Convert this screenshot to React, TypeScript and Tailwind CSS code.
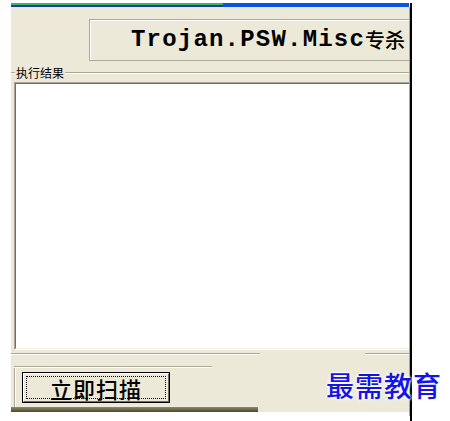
import React from 'react';

const cjk = "'Noto Sans CJK SC', sans-serif";

const App: React.FC = () => {
  return (
    <div className="relative w-[450px] h-[421px] bg-white overflow-hidden">
      {/* window, clipped on the right by a black edge */}
      <div className="ml-[11px] pt-[3px] w-[401px] h-[421px] flex">
        <div className="w-[398px] flex flex-col">
          {/* title bar strip */}
          <div className="flex h-[4px]">
            <div className="w-[212px] flex flex-col">
              <div className="h-[2px] bg-[#3cb371]" />
              <div className="h-[2px] bg-[#1b3f8f]" />
            </div>
            <div className="flex-1 bg-[#0a55e0]" />
          </div>

          <div className="h-[405px] bg-[#ece9d8] flex flex-col">
            {/* title box */}
            <div className="mt-[12px] ml-[78px] h-[42px] border-t border-l border-b border-[#aca899] shadow-[inset_1px_1px_0_#ffffff] flex items-center pl-[41px] whitespace-nowrap">
              <span
                className="text-[24px] font-bold text-black tracking-[1.2px] leading-none"
                style={{ fontFamily: "'Liberation Mono', monospace" }}
              >
                Trojan.PSW.Misc
              </span>
              <span
                className="text-[20px] font-medium text-black leading-none"
                style={{ fontFamily: cjk }}
              >
                专杀
              </span>
            </div>

            {/* group box header */}
            <div className="mt-[5px] h-[14px] flex items-center">
              <div className="w-[4px] h-[2px] border-t border-[#aca899] border-b border-b-white" />
              <span className="px-[1px] text-[12px] leading-[14px] text-black" style={{ fontFamily: cjk }}>
                执行结果
              </span>
              <div className="flex-1 h-[2px] border-t border-[#aca899] border-b border-b-white" />
            </div>

            {/* result area */}
            <div className="mt-[2px] ml-[3px] h-[268px] border-t border-l border-b border-t-[#aca899] border-l-[#aca899] border-b-white">
              <div className="h-full border-t border-l border-b border-t-[#716f64] border-l-[#716f64] border-b-[#f1efe2] bg-white" />
            </div>

            {/* group box bottom */}
            <div className="mt-[3px] flex h-[2px]">
              <div className="w-[249px] border-t border-[#aca899] border-b border-b-white" />
              <div className="w-[105px]" />
              <div className="flex-1 border-t border-[#aca899] border-b border-b-white" />
            </div>

            {/* bottom panel */}
            <div className="mt-[11px] ml-[3px] h-[41px] flex flex-col">
              <div className="w-[198px] h-[2px] border-t border-[#aca899] border-b border-b-white" />
              <div className="flex-1 border-l border-[#aca899] shadow-[inset_1px_0_0_#ffffff] pl-[7px] pt-[4px]">
                <button className="w-[148px] h-[31px] border border-black bg-[#ece9d8] p-0">
                  <div className="h-full border-t border-l border-white border-b border-r border-b-[#716f64] border-r-[#716f64] p-[2px]">
                    <div className="h-full border border-dotted border-black flex items-center justify-center">
                      <span className="text-[22px] font-medium leading-none text-black tracking-[1px]" style={{ fontFamily: cjk }}>
                        立即扫描
                      </span>
                    </div>
                  </div>
                </button>
              </div>
            </div>

            {/* dark bottom edge */}
            <div className="w-[247px] h-[5px] bg-gradient-to-b from-[#8e8b68] to-[#4a4830]" />
          </div>
        </div>
        <div className="w-[1px] bg-[#aca899] h-[409px] mt-[4px]" />
        <div className="w-[2px] bg-black" />
      </div>

      {/* watermark */}
      <div
        className="absolute left-[326px] top-[371px] text-[28px] font-medium leading-none text-[#1414e8] tracking-[1px] [text-shadow:0_0_2px_#ffffff,0_0_3px_#ffffff,0_0_4px_#ffffff]"
        style={{ fontFamily: cjk }}
      >
        最需教育
      </div>
    </div>
  );
};

export default App;
